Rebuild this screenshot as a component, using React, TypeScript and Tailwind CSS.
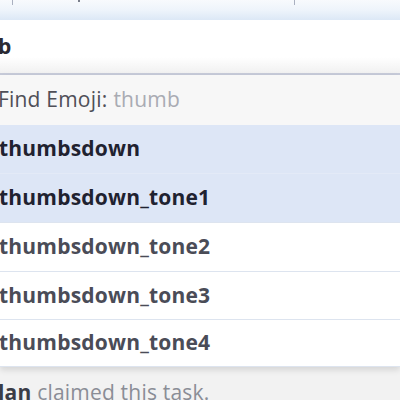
export default function App() {
  const rows = [
    { label: "thumbsdown", active: true, h: "h-[48px]" },
    { label: "thumbsdown_tone1", active: true, h: "h-[49px]" },
    { label: "thumbsdown_tone2", active: false, h: "h-[49px]" },
    { label: "thumbsdown_tone3", active: false, h: "h-[48px]" },
    { label: "thumbsdown_tone4", active: false, h: "h-[48px]" },
  ];
  return (
    <div
      className="w-[400px] h-[400px] overflow-hidden bg-[#f2f2f2] relative"
      style={{ fontFamily: '"Open Sans", "Noto Sans", sans-serif' }}
    >
      {/* top toolbar */}
      <div className="h-[20px] bg-gradient-to-b from-[#f8fafd] via-[#eef4fb] to-[#dce8f6] relative">
        <div className="absolute left-[12px] top-0 w-px h-[5px] bg-[#aab0c0]" />
        <div className="absolute left-[78px] top-0 w-[2px] h-[2px] bg-[#7a7f8c]" />
        <div className="absolute left-[294px] top-0 w-px h-[5px] bg-[#aab0c0]" />
      </div>
      {/* input area */}
      <div className="h-[53px] bg-gradient-to-b from-white from-70% to-[#f1f1f1] flex items-start pt-[16px]">
        <span className="text-[21px] leading-[21px] font-bold text-[#2a2a33] -ml-[2px]">b</span>
      </div>
      <div className="h-[2px] bg-[#c7cbd9]" />
      {/* dropdown */}
      <div className="shadow-[0_3px_6px_rgba(0,0,0,0.12)]">
        <div className="h-[50px] bg-[#f7f7f7] flex items-center text-[21px] tracking-[0.2px] -ml-[2px]">
          <span className="text-[#4f4f57]">Find Emoji:</span>
          <span className="text-[#a9abb3] ml-[6px]">thumb</span>
        </div>
        {rows.map((r, i) => (
          <div
            key={r.label}
            className={`${r.h} flex items-center text-[21px] tracking-[0.2px] font-bold ${
              r.active ? "bg-[#dde6f6] text-[#1f2230]" : "bg-white text-[#4a4c57]"
            } ${i > 0 ? (r.active ? "border-t border-[#e3eaf7]" : "border-t border-[#dde4ef]") : ""} ${
              i === rows.length - 1 ? "border-b border-[#dde4ef]" : ""
            }`}
          >
            <span className="-ml-[1px]">{r.label}</span>
          </div>
        ))}
      </div>
      <div className="pt-[11px] text-[21px] leading-[28px] tracking-[0.2px] -ml-[2px]">
        <span className="font-bold text-[#3a3c46]">lan</span>
        <span className="text-[#8a8d96]"> claimed this task.</span>
      </div>
    </div>
  );
}
